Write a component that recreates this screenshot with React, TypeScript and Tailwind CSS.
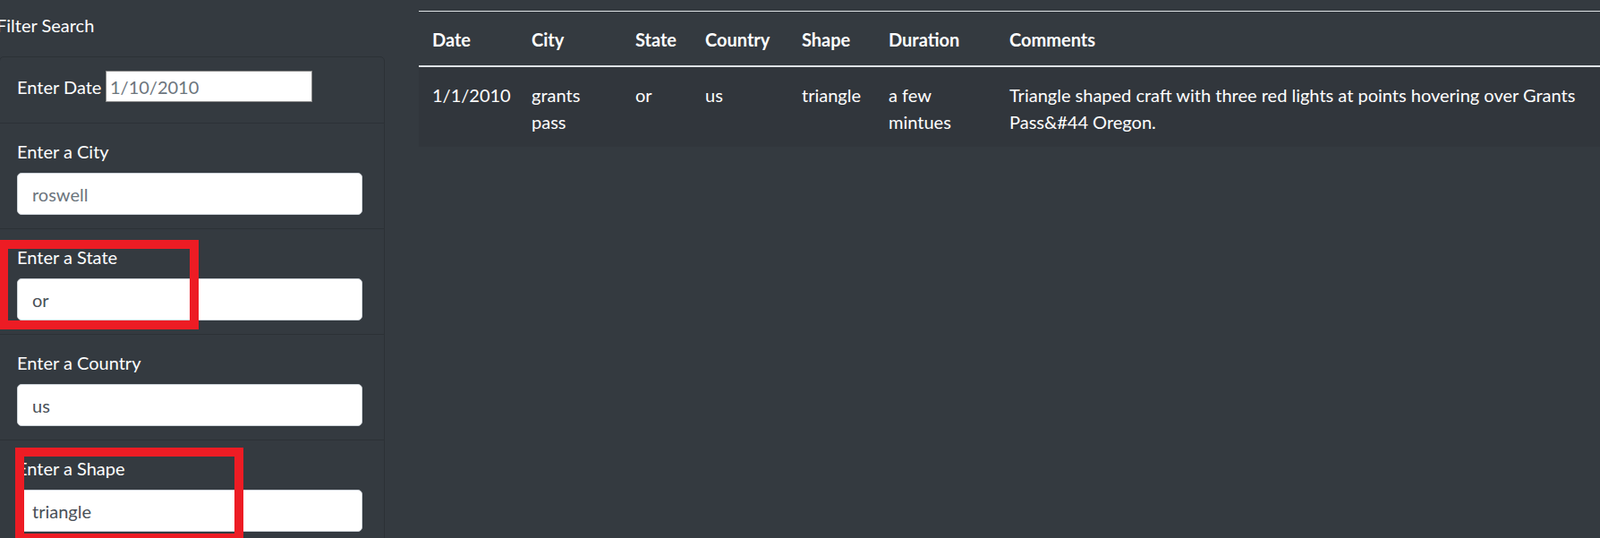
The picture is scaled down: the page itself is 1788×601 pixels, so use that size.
import React from "react";

const font = { fontFamily: "Lato, 'Open Sans', sans-serif" };

function FieldRow({ label, value, placeholder }: { label: string; value?: string; placeholder?: string }) {
  return (
    <div className="border-b border-[#2c3136] pt-[16px] pb-[15px] pl-[19px] pr-[24px]">
      <div className="h-[30px] leading-[30px] text-white">{label}</div>
      <input
        readOnly
        defaultValue={value}
        placeholder={placeholder}
        className="mt-[9px] block h-[47px] w-full rounded-[5px] border border-[#ced4da] bg-white pl-[16px] text-[20px] text-[#495057] placeholder:text-[#6c757d] outline-none"
      />
    </div>
  );
}

const cols = [111, 116, 78, 108, 97, 135, 675];

export default function App() {
  return (
    <div
      className="relative flex h-[601px] w-[1788px] overflow-hidden bg-[#343a40] text-[20px] leading-[30px]"
      style={font}
    >
      <div className="w-[430px] shrink-0">
        <div className="h-[63px] pt-[13px] -ml-[4px] text-white">Filter Search</div>
        <div className="-ml-[1px] w-[431px] rounded-[5px] border border-[#2c3136]">
          <div className="flex h-[74px] items-start border-b border-[#2c3136] pt-[15px] pl-[19px]">
            <div className="flex h-[35px] items-center">
              <span className="w-[99px] whitespace-nowrap text-white">Enter Date</span>
              <input
                readOnly
                placeholder="1/10/2010"
                className="h-[35px] w-[231px] border border-[#8a8a8a] bg-white pl-[4px] text-[20px] text-[#495057] placeholder:text-[#6c757d] outline-none"
              />
            </div>
          </div>
          <FieldRow label="Enter a City" placeholder="roswell" />
          <FieldRow label="Enter a State" value="or" />
          <FieldRow label="Enter a Country" value="us" />
          <FieldRow label="Enter a Shape" value="triangle" />
        </div>
      </div>

      <div className="ml-[38px] flex-1 pt-[12px]">
        <table className="w-[1320px] table-fixed border-collapse text-white">
          <colgroup>
            {cols.map((w, i) => (
              <col key={i} style={{ width: w }} />
            ))}
          </colgroup>
          <thead>
            <tr className="border-t border-b-2 border-t-[#dee2e6] border-b-[#dee2e6]">
              {["Date", "City", "State", "Country", "Shape", "Duration", "Comments"].map((h) => (
                <th key={h} className="px-[15px] pt-[16px] pb-[14px] text-left align-bottom font-bold">
                  {h}
                </th>
              ))}
            </tr>
          </thead>
          <tbody>
            <tr className="bg-[#31363c]">
              {[
                "1/1/2010",
                "grants pass",
                "or",
                "us",
                "triangle",
                "a few mintues",
                "Triangle shaped craft with three red lights at points hovering over Grants Pass&#44 Oregon.",
              ].map((c, i) => (
                <td key={i} className="px-[15px] pt-[16px] pb-[13px] align-top">
                  {c}
                </td>
              ))}
            </tr>
          </tbody>
        </table>
      </div>

      <div className="pointer-events-none absolute left-[-1px] top-[268px] h-[100px] w-[223px] border-[10px] border-[#ed1c24]" />
      <div className="pointer-events-none absolute left-[17px] top-[500px] h-[106px] w-[255px] border-[10px] border-[#ed1c24]" />
    </div>
  );
}
